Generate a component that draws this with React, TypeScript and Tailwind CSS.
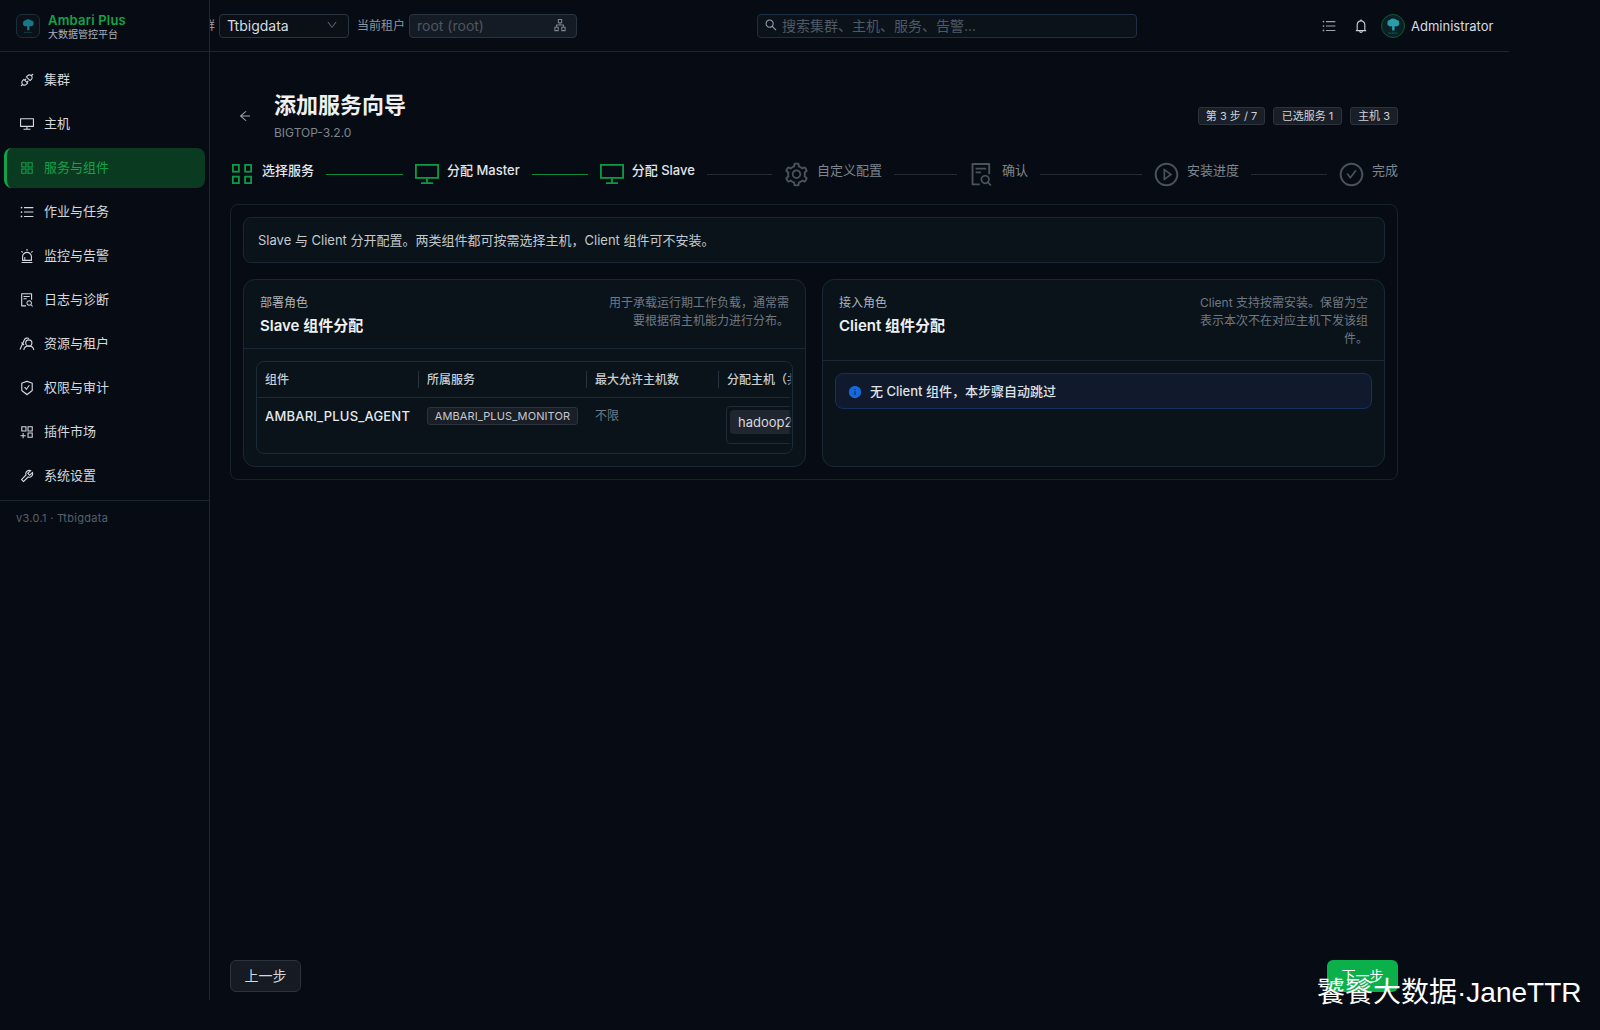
import {
  AiOutlineApi,
  AiOutlineDesktop,
  AiOutlineAppstore,
  AiOutlineUnorderedList,
  AiOutlineAlert,
  AiOutlineFileSearch,
  AiOutlineSafetyCertificate,
  AiOutlineAppstoreAdd,
  AiOutlineTool,
  AiOutlineDown,
  AiOutlineApartment,
  AiOutlineSearch,
  AiOutlineBell,
  AiOutlineArrowLeft,
  AiOutlineSetting,
  AiOutlinePlayCircle,
  AiOutlineCheckCircle,
  AiFillInfoCircle,
} from "react-icons/ai";

const FONT = "font-['Inter','Noto_Sans_CJK_SC',sans-serif]";

function TenantIcon({ className }: { className?: string }) {
  return (
    <svg viewBox="0 0 16 16" fill="none" stroke="currentColor" strokeWidth="1.1" className={className}>
      <path d="M1 13.500 5.500 3.500c.8-1.400 3-2 4.500-1" />
      <circle cx="9.800" cy="7" r="3.100" />
      <path d="M4.800 14c.3-2.400 2.300-4 5-4s4.700 1.600 5 4" />
      <path d="M2.500 6.500 5 9" />
    </svg>
  );
}

function GridStep({ className }: { className?: string }) {
  return (
    <svg viewBox="0 0 20 20" fill="none" stroke="currentColor" strokeWidth="1.800" className={className}>
      <rect x="0.900" y="0.900" width="6" height="6.800" />
      <rect x="13.100" y="0.900" width="6" height="6.800" />
      <rect x="0.900" y="12.600" width="6" height="6.500" />
      <rect x="13.100" y="12.600" width="6" height="6.500" />
    </svg>
  );
}

function MonitorStep({ className }: { className?: string }) {
  return (
    <svg viewBox="0 0 24 20" fill="none" stroke="currentColor" strokeWidth="1.800" className={className}>
      <rect x="0.900" y="0.900" width="22.200" height="13" />
      <path d="M12 14v4.500M6 19.100h12" />
    </svg>
  );
}

const navItems = [
  { label: "集群", icon: AiOutlineApi },
  { label: "主机", icon: AiOutlineDesktop },
  { label: "服务与组件", icon: AiOutlineAppstore, active: true },
  { label: "作业与任务", icon: AiOutlineUnorderedList },
  { label: "监控与告警", icon: AiOutlineAlert },
  { label: "日志与诊断", icon: AiOutlineFileSearch },
  { label: "资源与租户", icon: TenantIcon },
  { label: "权限与审计", icon: AiOutlineSafetyCertificate },
  { label: "插件市场", icon: AiOutlineAppstoreAdd },
  { label: "系统设置", icon: AiOutlineTool },
];

const steps = [
  { label: "选择服务", icon: GridStep, done: true, iconCls: "ml-[2px] h-5 w-5", textCls: "ml-[10px]", line: "ml-3 mr-3 w-[77px] bg-[#0d8a40]" },
  { label: "分配 Master", icon: MonitorStep, done: true, iconCls: "h-5 w-6", textCls: "ml-2", line: "mx-3 w-[56px] bg-[#0d8a40]" },
  { label: "分配 Slave", icon: MonitorStep, done: true, iconCls: "h-5 w-6", textCls: "ml-2", line: "ml-3 mr-[11px] w-[65px] bg-[#262c35]" },
  { label: "自定义配置", icon: AiOutlineSetting, iconCls: "h-[27px] w-[27px]", textCls: "ml-[7px]", line: "ml-3 mr-[11px] w-[63px] bg-[#262c35]" },
  { label: "确认", icon: AiOutlineFileSearch, iconCls: "h-[27px] w-[27px]", textCls: "ml-[7px]", line: "ml-3 mr-[11px] w-[102px] bg-[#262c35]" },
  { label: "安装进度", icon: AiOutlinePlayCircle, iconCls: "h-[27px] w-[27px]", textCls: "ml-[7px]", line: "ml-3 mr-[11px] w-[76px] bg-[#262c35]" },
  { label: "完成", icon: AiOutlineCheckCircle, iconCls: "h-[27px] w-[27px]", textCls: "ml-[7px]" },
];

function TreeLogo({ size, color }: { size: number; color: string }) {
  return (
    <svg width={size} height={size} viewBox="0 0 24 24" fill="none">
      <path
        d="M12 3C9.800 3 8.800 4 8.300 4.800 6.400 4.800 5 6.200 5.500 8c-.6 1.200-.2 2.700 1 3.300.8 1.200 2.300 1.500 3.500.8l.9.9V17.500h3V13l.9-.9c1.200.7 2.700.4 3.500-.8 1.200-.6 1.600-2.100 1-3.300.5-1.800-.9-3.200-2.800-3.200C15.200 4 14.200 3 12 3z"
        fill={color}
      />
      <path d="M6.500 20.500h11" stroke={color} strokeOpacity="0.6" strokeWidth="1.200" strokeDasharray="1.500 0.600" />
    </svg>
  );
}

function Sidebar() {
  return (
    <aside className="flex h-full w-[210px] shrink-0 flex-col border-r border-[#1c2732]">
      <div className="flex h-[52px] shrink-0 items-center gap-2 border-b border-[#1c2732] pt-[1px] pl-4">
        <div className="flex h-6 w-6 items-center justify-center rounded-md border border-[#1f2d38] bg-[#0a1119]">
          <TreeLogo size={18} color="#17788a" />
        </div>
        <div>
          <div className="text-[13px] leading-[15px] font-semibold tracking-[0.2px] text-[#12a34a]">Ambari Plus</div>
          <div className="text-[10px] leading-[12px] text-[#aab2bc]">大数据管控平台</div>
        </div>
      </div>
      <nav className="flex flex-col gap-1 px-1 pt-[8px]">
        {navItems.map((item) => {
          const Icon = item.icon;
          return (
            <div
              key={item.label}
              className={
                item.active
                  ? "flex h-10 items-center gap-[9px] rounded-lg border-l-[3px] border-[#12a34a] bg-[#0a3a1f] pl-[12px] text-[13px] text-[#12a34a]"
                  : "flex h-10 items-center gap-[9px] pl-[15px] text-[13px] text-[#d5d9de]"
              }
            >
              <Icon className="h-4 w-4 shrink-0" />
              <span>{item.label}</span>
            </div>
          );
        })}
      </nav>
      <div className="mt-[4px] -mr-px border-t border-[#1c2732] pt-[10px] pl-4 text-[11px] leading-[14px] tracking-[0.3px] text-[#56606c]">
        v3.0.1 · Ttbigdata
      </div>
    </aside>
  );
}

function TopBar() {
  return (
    <header className="flex h-[52px] shrink-0 items-center border-b border-[#1c2732] pt-[1px]">
      <div className="flex w-[9px] shrink-0 justify-end overflow-hidden text-[12px] text-[#9aa3ad]">
        <span className="shrink-0 whitespace-nowrap pr-1">集群</span>
      </div>
      <div className="flex h-6 w-[130px] items-center justify-between rounded border border-[#2a3440] bg-[#0b1017] pr-[10px] pb-[2px] pl-[7px] text-[14px] text-[#d8dce1]">
        <span>Ttbigdata</span>
        <AiOutlineDown className="h-3 w-3 text-[#5a6470]" />
      </div>
      <span className="ml-[8px] text-[12px] whitespace-nowrap text-[#8c96a1]">当前租户</span>
      <div className="ml-[4px] flex h-6 w-[168px] items-center justify-between rounded border border-[#2a3440] bg-[#151b25] pr-[9px] pb-[2px] pl-[7px] text-[14px] text-[#4d5662]">
        <span>root (root)</span>
        <AiOutlineApartment className="h-[14px] w-[14px] text-[#7a8490]" />
      </div>
      <div className="ml-[180px] flex h-6 w-[380px] items-center gap-[4px] rounded border border-[#1e2f44] bg-[#0b121a] pb-[2px] pl-[6px] text-[14px] text-[#4f5965]">
        <AiOutlineSearch className="h-[14px] w-[14px] text-[#98a1ab]" />
        <span>搜索集群、主机、服务、告警...</span>
      </div>
      <AiOutlineUnorderedList className="ml-[184px] h-4 w-4 text-[#9aa3ad]" />
      <AiOutlineBell className="ml-[16px] h-4 w-4 text-[#c8cdd3]" />
      <div className="ml-[12px] flex h-6 w-6 items-center justify-center rounded-full border border-[#0f5a34] bg-[#0a2024]">
        <TreeLogo size={20} color="#2a9da8" />
      </div>
      <span className="ml-[6px] translate-y-[1px] text-[13px] text-[#d8dce1]">Administrator</span>
    </header>
  );
}

function Tag({ children, widthCls }: { children: React.ReactNode; widthCls: string }) {
  return (
    <span className={`${widthCls} flex h-[18px] items-center justify-center rounded-[3px] border border-[#2c333d] bg-[#191e27] text-[11px] whitespace-nowrap text-[#cfd4da]`}>
      {children}
    </span>
  );
}

function Steps() {
  return (
    <div className="mt-[20px] flex h-[24px] items-center">
      {steps.map((s) => {
        const Icon = s.icon;
        return (
          <div key={s.label} className="flex items-center">
            <Icon className={`${s.iconCls} shrink-0 ${s.done ? "text-[#0d9a45]" : "text-[#4a525c]"}`} />
            <span
              className={
                s.done
                  ? `${s.textCls} -translate-y-[3px] text-[13px] font-medium whitespace-nowrap text-[#e2e5e9]`
                  : `${s.textCls} -translate-y-[3px] text-[13px] whitespace-nowrap text-[#7d858f]`
              }
            >
              {s.label}
            </span>
            {s.line && <div className={`${s.line} h-px`} />}
          </div>
        );
      })}
    </div>
  );
}

function PanelHead({ eyebrow, title, desc, descCls }: { eyebrow: string; title: string; desc: string; descCls: string }) {
  return (
    <div className="flex justify-between border-b border-[#1a2836] px-4 pt-[14px] pb-[12px]">
      <div>
        <div className="text-[12px] leading-[18px] text-[#aab2bc]">{eyebrow}</div>
        <div className="mt-[3px] text-[15px] leading-[21px] font-semibold text-[#eef0f2]">{title}</div>
      </div>
      <div className={`${descCls} text-right text-[12px] leading-[18px] text-[#6f7984]`}>{desc}</div>
    </div>
  );
}

function SlaveTable() {
  const th = "flex h-[35px] shrink-0 items-center text-[12px] font-medium text-[#c8cdd3]";
  const sep = "relative before:absolute before:left-0 before:top-[9px] before:h-[17px] before:w-px before:bg-[#26323e]";
  return (
    <div className="relative h-[93px] overflow-hidden rounded-lg border border-[#1c2b38]">
      <div className="flex border-b border-[#1c2b38]">
        <div className={`${th} w-[161px] pl-2`}>组件</div>
        <div className={`${th} ${sep} w-[168px] pl-[9px]`}>所属服务</div>
        <div className={`${th} ${sep} w-[132px] pl-[9px]`}>最大允许主机数</div>
        <div className={`${th} ${sep} w-[120px] pl-[9px] whitespace-nowrap`}>分配主机（共 3 台）</div>
      </div>
      <div className="flex pt-[9px]">
        <div className="flex h-[18px] w-[161px] shrink-0 translate-y-[1px] items-center pl-2 text-[13px] font-medium tracking-[0.2px] whitespace-nowrap text-[#e6e9ec]">
          AMBARI_PLUS_AGENT
        </div>
        <div className="w-[168px] shrink-0 pl-[9px]">
          <span className="flex h-[18px] w-[151px] items-center justify-center rounded-[3px] border border-[#2c333d] bg-[#191e27] text-[11px] tracking-[0.1px] text-[#c4c9cf]">
            AMBARI_PLUS_MONITOR
          </span>
        </div>
        <div className="flex h-[18px] w-[132px] shrink-0 items-center pl-[9px] text-[12px] text-[#6f7984]">不限</div>
        <div className="-mt-[1px] ml-[8px] h-[38px] w-[120px] shrink-0 rounded border border-[#1f2a36] p-[3px]">
          <span className="flex h-6 w-[90px] items-center rounded bg-[#20262f] pt-[2px] pl-[8px] text-[13px] text-[#d5d9de]">
            hadoop2
          </span>
        </div>
      </div>
      <div className="absolute top-0 right-0 bottom-0 w-[4px] bg-gradient-to-l from-[#0a1319] to-transparent" />
    </div>
  );
}

function Wizard() {
  return (
    <main className="flex min-h-0 flex-1 flex-col pr-[111px] pl-5">
      <div className="mt-[38px] flex items-start">
        <AiOutlineArrowLeft className="mt-[19px] ml-[8px] h-[14px] w-[14px] text-[#a0a8b2]" />
        <div className="ml-[22px]">
          <h1 className="text-[22px] leading-[31px] font-semibold text-[#eef0f2]">添加服务向导</h1>
          <div className="mt-[3px] text-[12px] leading-[18px] text-[#7d858f]">BIGTOP-3.2.0</div>
        </div>
        <div className="mt-[17px] ml-auto flex gap-2">
          <Tag widthCls="w-[67px]">第 3 步 / 7</Tag>
          <Tag widthCls="w-[69px]">已选服务 1</Tag>
          <Tag widthCls="w-[48px]">主机 3</Tag>
        </div>
      </div>
      <Steps />
      <section className="mt-[18px] rounded-lg border border-[#18222c] p-3">
        <div className="flex h-[46px] items-center rounded-lg border border-[#1a2836] bg-[#0a1319] pt-[1px] pl-[14px] text-[13px] text-[#c4c9cf]">
          Slave 与 Client 分开配置。两类组件都可按需选择主机，Client 组件可不安装。
        </div>
        <div className="mt-4 grid h-[188px] grid-cols-2 gap-4">
          <div className="rounded-xl border border-[#1a2836] bg-[#0a1319]">
            <PanelHead eyebrow="部署角色" title="Slave 组件分配" desc="用于承载运行期工作负载，通常需要根据宿主机能力进行分布。" descCls="w-[180px]" />
            <div className="p-3">
              <SlaveTable />
            </div>
          </div>
          <div className="rounded-xl border border-[#1a2836] bg-[#0a1319]">
            <PanelHead eyebrow="接入角色" title="Client 组件分配" desc="Client 支持按需安装。保留为空表示本次不在对应主机下发该组件。" descCls="w-[176px]" />
            <div className="p-3">
              <div className="flex h-9 items-center gap-2 rounded-lg border border-[#15305a] bg-[#111a2c] pt-[1px] pl-3 text-[13px] font-medium text-[#dfe3e7]">
                <AiFillInfoCircle className="h-[14px] w-[14px] text-[#1668dc]" />
                无 Client 组件，本步骤自动跳过
              </div>
            </div>
          </div>
        </div>
      </section>
      <div className="mt-auto mb-2 flex justify-between">
        <button className="h-8 w-[71px] rounded-md border border-[#2c333d] bg-[#161a22] pb-[2px] text-[14px] text-[#d5d9de]">上一步</button>
        <button className="h-8 w-[71px] rounded-md bg-[#0bb04a] pb-[2px] text-[14px] text-white">下一步</button>
      </div>
    </main>
  );
}

export default function App() {
  return (
    <div className={`${FONT} relative h-[1030px] w-[1600px] overflow-hidden bg-[#070c14]`}>
      <div className="flex h-[1000px] w-[1509px]">
        <Sidebar />
        <div className="flex min-w-0 flex-1 flex-col">
          <TopBar />
          <Wizard />
        </div>
      </div>
      <div className="absolute top-[973px] left-[1317px] text-[28px] leading-[40px] whitespace-nowrap text-white font-['Liberation_Sans','Noto_Sans_CJK_SC',sans-serif]">
        饕餮大数据·JaneTTR
      </div>
    </div>
  );
}
